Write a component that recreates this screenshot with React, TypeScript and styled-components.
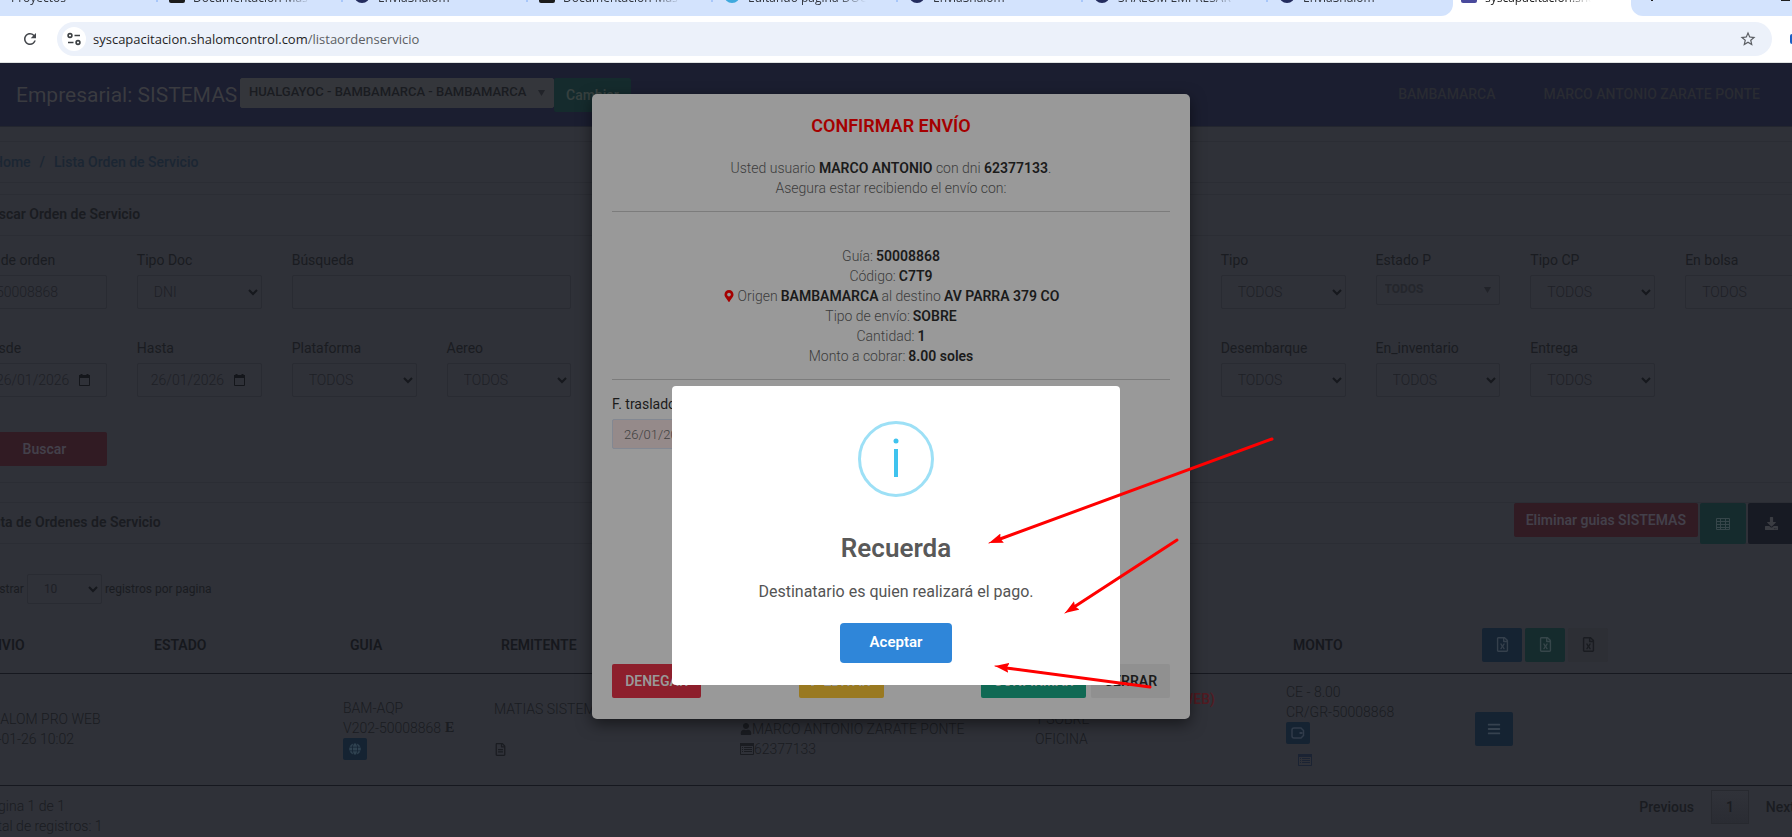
import React, { useId } from 'react';
import styled, { createGlobalStyle, css } from 'styled-components';
import {
  FaBars,
  FaDownload,
  FaGlobe,
  FaMapMarkerAlt,
  FaPen,
  FaRegFileAlt,
  FaRegFileExcel,
  FaUser,
} from 'react-icons/fa';
import { MdRefresh, MdStarBorder } from 'react-icons/md';

const color = {
  page: '#2f3138',
  pageAlt: '#2d2f35',
  line: '#292b32',
  hair: '#2b2d34',
  ink: '#1a1c21',
  soft: '#1e2026',
  nav: '#1b1e30',
  blue: '#152332',
  green: '#152b2d',
  wine: '#311b23',
};

const GlobalStyle = createGlobalStyle`
  *, *::before, *::after { box-sizing: border-box; }
  body {
    margin: 0;
    background: ${color.page};
    color: ${color.ink};
    font: 300 14px/20px Roboto, "Liberation Sans", sans-serif;
  }
  button, input, select { font: inherit; color: inherit; margin: 0; }
  button { border: 0; cursor: pointer; white-space: nowrap; }
  a { color: inherit; text-decoration: none; }
  h1, h2, p { margin: 0; }
  svg { display: block; flex: none; }
`;

const Screen = styled.div`
  position: relative;
  overflow: hidden;
  min-height: 100vh;
  display: flex;
  flex-direction: column;
`;

/* ---------- browser chrome ---------- */

const TabStrip = styled.nav`
  display: flex;
  align-items: flex-end;
  height: 16px;
  overflow: hidden;
  background: #fff;
  color: #30343c;
  font: 400 12px/16px "Open Sans", sans-serif;
`;

const Tab = styled.div<{ $w: number; $active?: boolean; $last?: boolean }>`
  display: flex;
  align-items: center;
  gap: 8px;
  flex: none;
  width: ${p => p.$w}px;
  height: 36px;
  padding: 0 40px 0 11px;
  background: #d3e3fd;
  border-radius: 0 0 ${p => (p.$last ? 12 : 0)}px 0;
  white-space: nowrap;
  ${p =>
    p.$active &&
    css`
      padding-left: 8px;
      background: #fff;
      color: #1f1f1f;
    `}
`;

const TabName = styled.span`
  flex: 1;
  overflow: hidden;
  mask-image: linear-gradient(90deg, #000 75%, transparent);
`;

const TabRule = styled.span`
  width: 2px;
  height: 16px;
  margin: 0 -40px 8px 22px;
  background: #a8c7fa;
`;

const Favicon = styled.span<{ $bg: string; $round?: boolean }>`
  width: 16px;
  height: 16px;
  margin-bottom: 6px;
  border-radius: ${p => (p.$round ? 8 : 2)}px;
  background: ${p => p.$bg};
`;

const StripEnd = styled.div`
  flex: 1;
  display: flex;
  justify-content: space-between;
  align-items: flex-start;
  align-self: stretch;
  padding: 0 2px 0 20px;
  border-radius: 0 0 0 12px;
  background: #d3e3fd;
`;

const Tick = styled.span<{ $w: number }>`
  width: ${p => p.$w}px;
  height: 1px;
  background: #1f1f1f;
`;

const AddressRow = styled.div`
  display: flex;
  align-items: center;
  gap: 18px;
  height: 47px;
  padding: 0 0 0 21px;
  background: #fff;
  border-bottom: 1px solid #dfe3e1;
  color: #44474c;
`;

const AddressBar = styled.div`
  flex: 1;
  display: flex;
  align-items: center;
  gap: 7px;
  height: 34px;
  padding: 0 15px 0 5px;
  border-radius: 17px;
  background: #ecf1fa;
  color: #5b5e63;
  font: 400 13px/20px "Open Sans", "Noto Sans", sans-serif;
  b { font-weight: 400; color: #1f1f1f; }
`;

const RoundIcon = styled.button`
  display: grid;
  place-items: center;
  width: 24px;
  height: 24px;
  padding: 0;
  border-radius: 12px;
  background: #fff;
`;

const PlainButton = styled.button`
  padding: 0;
  background: none;
`;

const Url = styled.div`
  flex: 1;
`;

const Extension = styled.span`
  width: 2px;
  height: 10px;
  border-radius: 2px 0 0 2px;
  background: #1b5fc4;
`;

/* ---------- application ---------- */

const NavBar = styled.header`
  display: flex;
  align-items: flex-start;
  height: 64px;
  padding: 15px 32px 0 16px;
  background: ${color.nav};
  border-bottom: 1px solid #23262f;
`;

const Brand = styled.h1`
  width: 224px;
  font: 400 21px/34px Roboto, sans-serif;
  color: #3a3b40;
`;

const NavLinks = styled.nav`
  display: flex;
  gap: 48px;
  margin-left: auto;
  font-weight: 500;
  line-height: 32px;
  color: #292b32;
`;

const Picker = styled.div<{ $h: number }>`
  display: grid;
  align-items: center;
  height: ${p => p.$h}px;
  > * { grid-area: 1 / 1; }
  > svg { justify-self: end; pointer-events: none; }
`;

const Select = styled.select`
  appearance: none;
  width: 100%;
  height: 100%;
  padding: 0 16px;
  border: 1px solid ${color.line};
  border-radius: 2px;
  background: transparent;
  color: ${color.soft};
`;

const FlatSelect = styled(Select)<{ $filled?: boolean }>`
  padding: 0 8px 3px;
  font-weight: ${p => (p.$filled ? 500 : 700)};
  font-size: ${p => (p.$filled ? 13 : 12)}px;
  color: #24262c;
  ${p =>
    p.$filled &&
    css`
      border-color: #34363b;
      background: #34363b;
      color: ${color.ink};
    `}
`;

const BranchPicker = styled(Picker)`
  width: 314px;
`;

const Button = styled.button<{ $bg: string; $fg?: string; $w?: number; $h?: number }>`
  display: flex;
  align-items: center;
  justify-content: center;
  gap: 3px;
  height: ${p => p.$h ?? 34}px;
  ${p => (p.$w ? `width: ${p.$w}px;` : '')}
  padding: 0 ${p => (p.$w ? 0 : 12)}px;
  border-radius: 2px;
  background: ${p => p.$bg};
  color: ${p => p.$fg ?? '#43404a'};
  font-weight: 600;
`;

const Body = styled.main`
  display: flex;
  flex-direction: column;
  margin: 0 -18px;
`;

const Crumbs = styled.nav`
  display: flex;
  gap: 9px;
  margin-top: 14px;
  padding: 10px 11px;
  border: 1px solid ${color.hair};
  border-width: 1px 0;
  font-weight: 500;
  color: #1b2633;
`;

const CardHead = styled.header<{ $gap: number }>`
  display: flex;
  align-items: flex-start;
  justify-content: space-between;
  height: 42px;
  margin-top: ${p => p.$gap}px;
  border: 1px solid ${color.hair};
  border-width: 1px 0;
`;

const CardTitle = styled.h2`
  font: 600 14px/38px Roboto, sans-serif;
`;

const HeadActions = styled.div`
  display: flex;
  gap: 2px;
  padding-right: 16px;
`;

const Filters = styled.form`
  display: grid;
  grid-template-columns: repeat(12, minmax(0, 1fr));
  column-gap: 30px;
  row-gap: 29px;
  padding: 14px 0 16px;
  border-bottom: 1px solid ${color.hair};
`;

const Field = styled.div<{ $col: number; $span?: number }>`
  grid-column: ${p => p.$col} / span ${p => p.$span ?? 1};
  display: flex;
  flex-direction: column;
  gap: 5px;
  label { font-weight: 400; color: ${color.ink}; }
`;

const TextInput = styled.input`
  width: 100%;
  height: 34px;
  padding: 0 13px;
  border: 1px solid ${color.line};
  border-radius: 2px;
  background: transparent;
  color: ${color.soft};
`;

const DateBox = styled(Picker)`
  > svg { margin-right: 15px; }
`;

const SearchButton = styled(Button)`
  grid-column: 1;
  margin-top: 6px;
`;

const LengthRow = styled.div`
  display: flex;
  align-items: center;
  gap: 3px;
  margin-top: 30px;
  font-size: 12px;
  font-weight: 400;
`;

const LengthPicker = styled(Picker)`
  width: 75px;
`;

const Table = styled.table`
  width: 100%;
  margin-top: 14px;
  border-collapse: collapse;
  table-layout: fixed;
  th, td { text-align: left; vertical-align: middle; }
  th {
    height: 55px;
    padding: 0 15px 1px;
    font-weight: 600;
    color: #16181d;
  }
  td { height: 112px; padding: 0 8px; white-space: nowrap; }
  th:first-child { padding-left: 2px; }
  td:first-child { padding-left: 0; }
  tr { border-bottom: 1px solid #16181f; }
`;

const Line = styled.div<{ $h?: number }>`
  display: flex;
  align-items: center;
  min-height: ${p => p.$h ?? 20}px;
`;

const Stamp = styled(Line)`
  width: 92px;
  justify-content: flex-end;
`;

const Heavy = styled.b`
  margin-left: 4px;
  font: 700 14px/20px "Liberation Serif", serif;
`;

const Alarm = styled.b`
  width: 180px;
  font-weight: 600;
  text-align: right;
  color: #521b22;
`;

const ButtonRow = styled.div`
  display: flex;
  gap: 3px;
`;

const LinkIcon = styled.a`
  margin-left: 12px;
  color: #1b2333;
`;

const TableFoot = styled.footer`
  display: flex;
  justify-content: space-between;
  padding-top: 4px;
  margin-bottom: 7px;
  p { margin-top: 6px; }
`;

const Pager = styled.nav`
  display: flex;
  align-items: center;
  height: 34px;
  margin-right: -2px;
  font-weight: 500;
`;

const PageButton = styled.button<{ $current?: boolean }>`
  height: 34px;
  padding: 0 ${p => (p.$current ? 14 : 17)}px;
  border: ${p => (p.$current ? 1 : 0)}px solid #27292f;
  background: ${p => (p.$current ? 'linear-gradient(#303239, #2a2c33)' : 'none')};
`;

const BottomEdge = styled.div`
  flex: 1;
  min-height: 2px;
  background: #32242d;
`;

/* ---------- layered dialogs ---------- */

const ModalLayer = styled.div`
  position: absolute;
  inset: 94px 10px auto 0;
  display: flex;
  justify-content: center;
`;

const Modal = styled.section`
  width: 598px;
  height: 625px;
  padding: 21px 20px;
  display: flex;
  flex-direction: column;
  border-radius: 5px;
  background: #999;
  box-shadow: 0 5px 15px rgba(0, 0, 0, 0.5);
  color: #3c3c3c;
  text-align: center;
  b { font-weight: 600; color: #1b1b1b; }
`;

const ModalTitle = styled.h2`
  margin-bottom: 21px;
  font: 600 18px/22px Roboto, sans-serif;
  color: #a50000;
`;

const Rule = styled.hr`
  width: 100%;
  margin: 13px 0 0;
  border: 0;
  border-top: 1px solid #7c7c7c;
`;

const Details = styled.div`
  margin-top: 34px;
  display: flex;
  flex-direction: column;
  align-items: center;
  p { display: flex; align-items: center; gap: 3px; }
`;

const MoveDate = styled.div`
  display: flex;
  flex-direction: column;
  gap: 5px;
  width: 180px;
  margin-top: 14px;
  text-align: left;
  label { font-weight: 400; color: #1b1b1b; }
  input {
    height: 30px;
    padding: 0 11px;
    border: 1px solid #838892;
    border-radius: 2px;
    background: #958a8a;
    color: #404040;
    font-size: 13px;
  }
`;

const ModalFoot = styled.footer`
  display: flex;
  justify-content: space-between;
  margin-top: auto;
`;

const FootGroup = styled.div`
  display: flex;
  gap: 5px;
`;

const AlertLayer = styled.div`
  position: absolute;
  inset: 386px 0 auto;
  display: flex;
  justify-content: center;
`;

const Alert = styled.section`
  position: relative;
  width: 448px;
  height: 299px;
  padding: 35px 20px 22px;
  display: flex;
  flex-direction: column;
  align-items: center;
  border-radius: 4px;
  background: #fff;
  color: #545454;
  font: 400 16px/24px Roboto, sans-serif;
`;

const AlertTitle = styled.h2`
  margin-top: 35px;
  font: 600 26px/32px Roboto, sans-serif;
  color: #595959;
`;

const AlertText = styled.p`
  padding: 16px 0 19px;
`;

const AcceptButton = styled.button`
  width: 112px;
  height: 40px;
  padding: 0 0 2px;
  border-radius: 4px;
  background: #2f86d9;
  color: #fff;
  font-size: 15px;
  font-weight: 600;
`;

const Arrows = styled.svg`
  position: absolute;
  inset: 0 auto auto 0;
  overflow: visible;
  pointer-events: none;
`;

/* ---------- small drawings ---------- */

const Chevron = () => (
  <svg width="20" height="12" viewBox="0 0 20 12" fill="none" stroke="#16181d" strokeWidth="2">
    <path d="M7 4l4 4 4-4" />
  </svg>
);

const Triangle = () => (
  <svg width="24" height="14" viewBox="0 0 24 14" fill="#212329">
    <path d="M8 4h7l-3.500 6z" />
  </svg>
);

const CalendarIcon = () => (
  <svg width="14" height="14" viewBox="0 0 14 14" fill="none" stroke="#14161b" strokeWidth="1">
    <path d="M1.500 2.500h10v10h-10z" />
    <path d="M1 3h11M1 4h11M3.500 1v2M9.500 1v2" strokeWidth="2" />
  </svg>
);

const TuneIcon = () => (
  <svg width="16" height="16" viewBox="0 0 16 16" fill="none" stroke="#3c4043" strokeWidth="1.600">
    <circle cx="4" cy="4.500" r="1.900" />
    <path d="M8.500 4.500H14M2 11.500h5.500" />
    <circle cx="12" cy="11.500" r="1.900" />
  </svg>
);

const VoucherIcon = () => (
  <svg width="14" height="12" viewBox="0 0 14 12" fill="none" stroke="#303b4a" strokeWidth="1.500">
    <path d="M3 1h7l2.500 2.500v5L10 11H3a2 2 0 0 1-2-2V3a2 2 0 0 1 2-2z" />
    <path d="M8.500 6h3" strokeWidth="2" />
  </svg>
);

const GridIcon = () => (
  <svg width="14" height="12" viewBox="0 0 14 12" fill="none" stroke="currentColor">
    <path d="M.5.5h13v11H.5zM.5 3.500h13M.5 6.500h13M.5 9.500h13M4.500.5v11M9.500.5v11" />
  </svg>
);

const ListIcon = () => (
  <svg width="14" height="12" viewBox="0 0 14 12" fill="none" stroke="currentColor">
    <path d="M.5.5h13v11H.5z" />
    <path d="M0 1.500h14" strokeWidth="3" />
    <path d="M2 4.500h1M4 4.500h8M2 6.500h1M4 6.500h8M2 8.500h1M4 8.500h8" />
  </svg>
);

const InfoIcon = () => (
  <svg width="76" height="76" viewBox="0 0 76 76">
    <circle cx="38" cy="38" r="36.500" fill="none" stroke="#9de0f6" strokeWidth="3" />
    <circle cx="38" cy="20" r="2.500" fill="#3fc3ee" />
    <path d="M36 28h4v28h-4z" fill="#3fc3ee" />
  </svg>
);

/* ---------- pieces ---------- */

function Choice({ label, value, col }: { label: string; value: string; col: number }) {
  const id = useId();
  return (
    <Field $col={col}>
      <label htmlFor={id}>{label}</label>
      <Picker $h={34}>
        <Select id={id}>
          <option>{value}</option>
        </Select>
        <Chevron />
      </Picker>
    </Field>
  );
}

function DateField({ label, col }: { label: string; col: number }) {
  const id = useId();
  return (
    <Field $col={col}>
      <label htmlFor={id}>{label}</label>
      <DateBox $h={34}>
        <TextInput id={id} defaultValue="26/01/2026" />
        <CalendarIcon />
      </DateBox>
    </Field>
  );
}

const tabs = [
  { name: 'Documentación Más', bg: '#1b1b1b' },
  { name: 'EnviaShalom', bg: '#232c5e', round: true },
  { name: 'Documentación Más', bg: '#1b1b1b' },
  { name: 'Editando página DOC', bg: '#3fa9dd', round: true },
  { name: 'EnviaShalom', bg: '#232c5e', round: true },
  { name: 'SHALOM EMPRESAR', bg: '#232c5e', round: true },
  { name: 'EnviaShalom', bg: '#232c5e', round: true },
];

const columns = [157, 196, 151, 246, 295, 251, 189];

export default function App() {
  return (
    <Screen>
      <GlobalStyle />
      <TabStrip>
        <Tab $w={158}>
          <TabName>Proyectos</TabName>
          <TabRule />
        </Tab>
        {tabs.map((t, i) => (
          <Tab key={i} $w={185} $last={i === 6}>
            <Favicon $bg={t.bg} $round={t.round} />
            <TabName>{t.name}</TabName>
            {i < 6 && <TabRule />}
          </Tab>
        ))}
        <Tab $w={178} $active>
          <Favicon $bg="#4a4a9c" />
          <TabName>syscapacitacion.shalom</TabName>
        </Tab>
        <StripEnd>
          <Tick $w={2} />
          <Tick $w={9} />
        </StripEnd>
      </TabStrip>

      <AddressRow>
        <PlainButton aria-label="Recargar">
          <MdRefresh size={18} />
        </PlainButton>
        <AddressBar>
          <RoundIcon aria-label="Información del sitio">
            <TuneIcon />
          </RoundIcon>
          <Url>
            <b>syscapacitacion.shalomcontrol.com</b>/listaordenservicio
          </Url>
          <PlainButton aria-label="Favorito">
            <MdStarBorder size={18} />
          </PlainButton>
        </AddressBar>
        <Extension />
      </AddressRow>

      <NavBar>
        <Brand>Empresarial: SISTEMAS</Brand>
        <BranchPicker $h={30}>
          <FlatSelect $filled aria-label="Sucursal">
            <option>HUALGAYOC - BAMBAMARCA - BAMBAMARCA</option>
          </FlatSelect>
          <Triangle />
        </BranchPicker>
        <Button $bg={color.green} $fg="#36403f">
          Cambiar
        </Button>
        <NavLinks>
          <a href="#sede">BAMBAMARCA</a>
          <a href="#usuario">MARCO ANTONIO ZARATE PONTE</a>
        </NavLinks>
      </NavBar>

      <Body>
        <Crumbs>
          <a href="#home">Home</a>
          <span>/</span>
          <a href="#lista">Lista Orden de Servicio</a>
        </Crumbs>

        <CardHead $gap={11}>
          <CardTitle>Buscar Orden de Servicio</CardTitle>
        </CardHead>
        <Filters>
          <Field $col={1}>
            <label htmlFor="orden">N° de orden</label>
            <TextInput id="orden" defaultValue="50008868" />
          </Field>
          <Choice label="Tipo Doc" value="DNI" col={2} />
          <Field $col={3} $span={2}>
            <label htmlFor="busqueda">Búsqueda</label>
            <TextInput id="busqueda" />
          </Field>
          <Choice label="Tipo" value="TODOS" col={9} />
          <Field $col={10}>
            <label htmlFor="estado">Estado P</label>
            <Picker $h={30}>
              <FlatSelect id="estado">
                <option>TODOS</option>
              </FlatSelect>
              <Triangle />
            </Picker>
          </Field>
          <Choice label="Tipo CP" value="TODOS" col={11} />
          <Choice label="En bolsa" value="TODOS" col={12} />
          <DateField label="Desde" col={1} />
          <DateField label="Hasta" col={2} />
          <Choice label="Plataforma" value="TODOS" col={3} />
          <Choice label="Aereo" value="TODOS" col={4} />
          <Choice label="Desembarque" value="TODOS" col={9} />
          <Choice label="En_inventario" value="TODOS" col={10} />
          <Choice label="Entrega" value="TODOS" col={11} />
          <SearchButton type="button" $bg={color.wine}>
            Buscar
          </SearchButton>
        </Filters>

        <CardHead $gap={19}>
          <CardTitle>Lista de Ordenes de Servicio</CardTitle>
          <HeadActions>
            <Button $bg={color.wine}>Eliminar guias SISTEMAS</Button>
            <Button $bg={color.green} $fg="#36464a" $w={46} $h={41} aria-label="Tabla">
              <GridIcon />
            </Button>
            <Button $bg="#171a23" $fg="#3a3c42" $w={46} $h={41} aria-label="Descargar">
              <FaDownload size={13} />
            </Button>
          </HeadActions>
        </CardHead>

        <LengthRow>
          <label htmlFor="largo">Mostrar</label>
          <LengthPicker $h={30}>
            <Select id="largo">
              <option>10</option>
            </Select>
            <Chevron />
          </LengthPicker>
          <span>registros por pagina</span>
        </LengthRow>

        <Table>
          <colgroup>
            {columns.map((w, i) => (
              <col key={i} width={w} />
            ))}
            <col />
          </colgroup>
          <thead>
            <tr>
              <th>ENVIO</th>
              <th>ESTADO</th>
              <th>GUIA</th>
              <th>REMITENTE</th>
              <th>DESTINATARIO</th>
              <th>CARGA</th>
              <th>MONTO</th>
              <th>
                <ButtonRow>
                  <Button $bg={color.blue} $fg="#35404c" $w={40} aria-label="Excel azul">
                    <FaRegFileExcel size={15} />
                  </Button>
                  <Button $bg={color.green} $fg="#36464a" $w={40} aria-label="Excel verde">
                    <FaRegFileExcel size={15} />
                  </Button>
                  <Button $bg={color.pageAlt} $fg={color.ink} $w={40} aria-label="Excel">
                    <FaRegFileExcel size={15} />
                  </Button>
                </ButtonRow>
              </th>
            </tr>
          </thead>
          <tbody>
            <tr>
              <td>
                <Line>SHALOM PRO WEB</Line>
                <Stamp>2026-01-26 10:02</Stamp>
              </td>
              <td />
              <td>
                <Line>BAM-AQP</Line>
                <Line>
                  V202-50008868<Heavy>E</Heavy>
                </Line>
                <Button $bg={color.blue} $fg="#2f4250" $w={24} $h={22} aria-label="Web">
                  <FaGlobe size={12} />
                </Button>
              </td>
              <td>
                <Line>MATIAS SISTEMAS</Line>
                <Line />
                <Line>
                  <FaRegFileAlt size={13} />
                </Line>
              </td>
              <td>
                <Line />
                <Line>
                  <FaUser size={12} />
                  MARCO ANTONIO ZARATE PONTE
                </Line>
                <Line>
                  <ListIcon />
                  62377133
                </Line>
              </td>
              <td>
                <Line>
                  <Alarm>(SHALOM PRO WEB)</Alarm>
                </Line>
                <Line>1 SOBRE</Line>
                <Line>OFICINA</Line>
                <Line />
              </td>
              <td>
                <Line>CE - 8.00</Line>
                <Line>CR/GR-50008868</Line>
                <Button $bg={color.blue} $w={24} $h={22} aria-label="Comprobante">
                  <VoucherIcon />
                </Button>
                <Line $h={32}>
                  <LinkIcon href="#detalle" aria-label="Detalle">
                    <ListIcon />
                  </LinkIcon>
                </Line>
              </td>
              <td>
                <Button $bg={color.blue} $fg="#36424f" $w={38} aria-label="Opciones">
                  <FaBars />
                </Button>
              </td>
            </tr>
          </tbody>
        </Table>

        <TableFoot>
          <p>
            Página 1 de 1<br />
            Total de registros: 1
          </p>
          <Pager>
            <PageButton>Previous</PageButton>
            <PageButton $current>1</PageButton>
            <PageButton>Next</PageButton>
          </Pager>
        </TableFoot>
      </Body>
      <BottomEdge />

      <ModalLayer>
        <Modal role="dialog" aria-label="Confirmar envío">
          <ModalTitle>CONFIRMAR ENVÍO</ModalTitle>
          <p>
            Usted usuario <b>MARCO ANTONIO</b> con dni <b>62377133</b>.<br />
            Asegura estar recibiendo el envío con:
          </p>
          <Rule />
          <Details>
            <p>
              Guía: <b>50008868</b>
            </p>
            <p>
              Código: <b>C7T9</b>
            </p>
            <p>
              <FaMapMarkerAlt size={12} color="#a50000" />
              Origen <b>BAMBAMARCA</b> al destino <b>AV PARRA 379 CO</b>
            </p>
            <p>
              Tipo de envío: <b>SOBRE</b>
            </p>
            <p>
              Cantidad: <b>1</b>
            </p>
            <p>
              Monto a cobrar: <b>8.00 soles</b>
            </p>
          </Details>
          <Rule />
          <MoveDate>
            <label htmlFor="traslado">F. traslado</label>
            <input id="traslado" defaultValue="26/01/2026" />
          </MoveDate>
          <ModalFoot>
            <Button $bg="#8d1f2c" $fg="#999" $w={89}>
              DENEGAR
            </Button>
            <Button $bg="#997921" $fg="#999" $w={85}>
              <FaPen size={9} />
              EDITAR
            </Button>
            <FootGroup>
              <Button $bg="#106954" $fg="#999" $w={105}>
                CONFIRMAR
              </Button>
              <Button $bg="#909090" $fg="#1b1b1b" $w={79}>
                CERRAR
              </Button>
            </FootGroup>
          </ModalFoot>
        </Modal>
      </ModalLayer>

      <AlertLayer>
        <Alert role="alertdialog" aria-label="Recuerda">
          <InfoIcon />
          <AlertTitle>Recuerda</AlertTitle>
          <AlertText>Destinatario es quien realizará el pago.</AlertText>
          <AcceptButton>Aceptar</AcceptButton>
          <Arrows width="448" height="299" stroke="#f00" strokeWidth="3" strokeLinecap="round">
            <defs>
              <marker
                id="tip"
                markerUnits="userSpaceOnUse"
                markerWidth="15"
                markerHeight="10"
                refX="14"
                refY="5"
                orient="auto"
              >
                <path d="M0 0l14 5-14 5 2-5z" fill="#f00" stroke="none" />
              </marker>
            </defs>
            <path d="M600 53L328 153" />
            <path d="M600 53L317 157" strokeWidth="1" markerEnd="url(#tip)" />
            <path d="M505 154L402 221" />
            <path d="M505 154L393 227" strokeWidth="1" markerEnd="url(#tip)" />
            <path d="M478 301L334 282" />
            <path d="M478 301L323 280" strokeWidth="1" markerEnd="url(#tip)" />
          </Arrows>
        </Alert>
      </AlertLayer>
    </Screen>
  );
}
